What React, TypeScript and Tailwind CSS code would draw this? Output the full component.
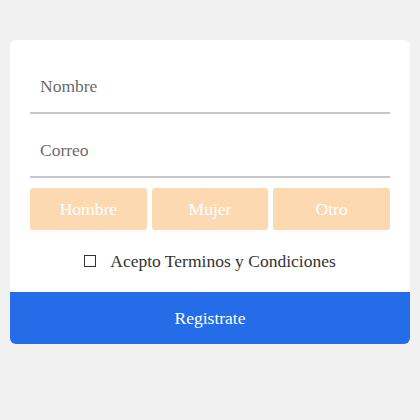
import React from "react";

export default function App() {
  return (
    <div className="w-[420px] h-[420px] bg-[#f1f1f1] pt-[40px] px-[10px]" style={{ fontFamily: '"Liberation Serif", serif' }}>
      <div className="bg-white rounded-[6px] overflow-hidden">
        <div className="px-[20px] pt-[20px] pb-[10px] flex flex-col gap-[10px]">
          <div className="h-[54px] border-b-2 border-[#c8c8c8] flex items-center pl-[10px] text-[17.5px] text-[#6b6b6b]">Nombre</div>
          <div className="h-[54px] border-b-2 border-[#c8c8c8] flex items-center pl-[10px] text-[17.5px] text-[#6b6b6b]">Correo</div>
          <div className="grid grid-cols-3 gap-[5px]">
            <div className="h-[42px] rounded-[3px] bg-[#fdd9b1] text-white text-[17.5px] flex items-center justify-center">Hombre</div>
            <div className="h-[42px] rounded-[3px] bg-[#fdd9b1] text-white text-[17.5px] flex items-center justify-center">Mujer</div>
            <div className="h-[42px] rounded-[3px] bg-[#fdd9b1] text-white text-[17.5px] flex items-center justify-center">Otro</div>
          </div>
          <div className="h-[42px] flex items-center justify-center gap-[14px] text-[17.5px] text-[#333]">
            <span className="w-[12px] h-[12px] border border-[#333] bg-white"></span>
            <span>Acepto Terminos y Condiciones</span>
          </div>
        </div>
        <div className="h-[52px] bg-[#256ce9] text-white text-[17.5px] flex items-center justify-center">Registrate</div>
      </div>
    </div>
  );
}
